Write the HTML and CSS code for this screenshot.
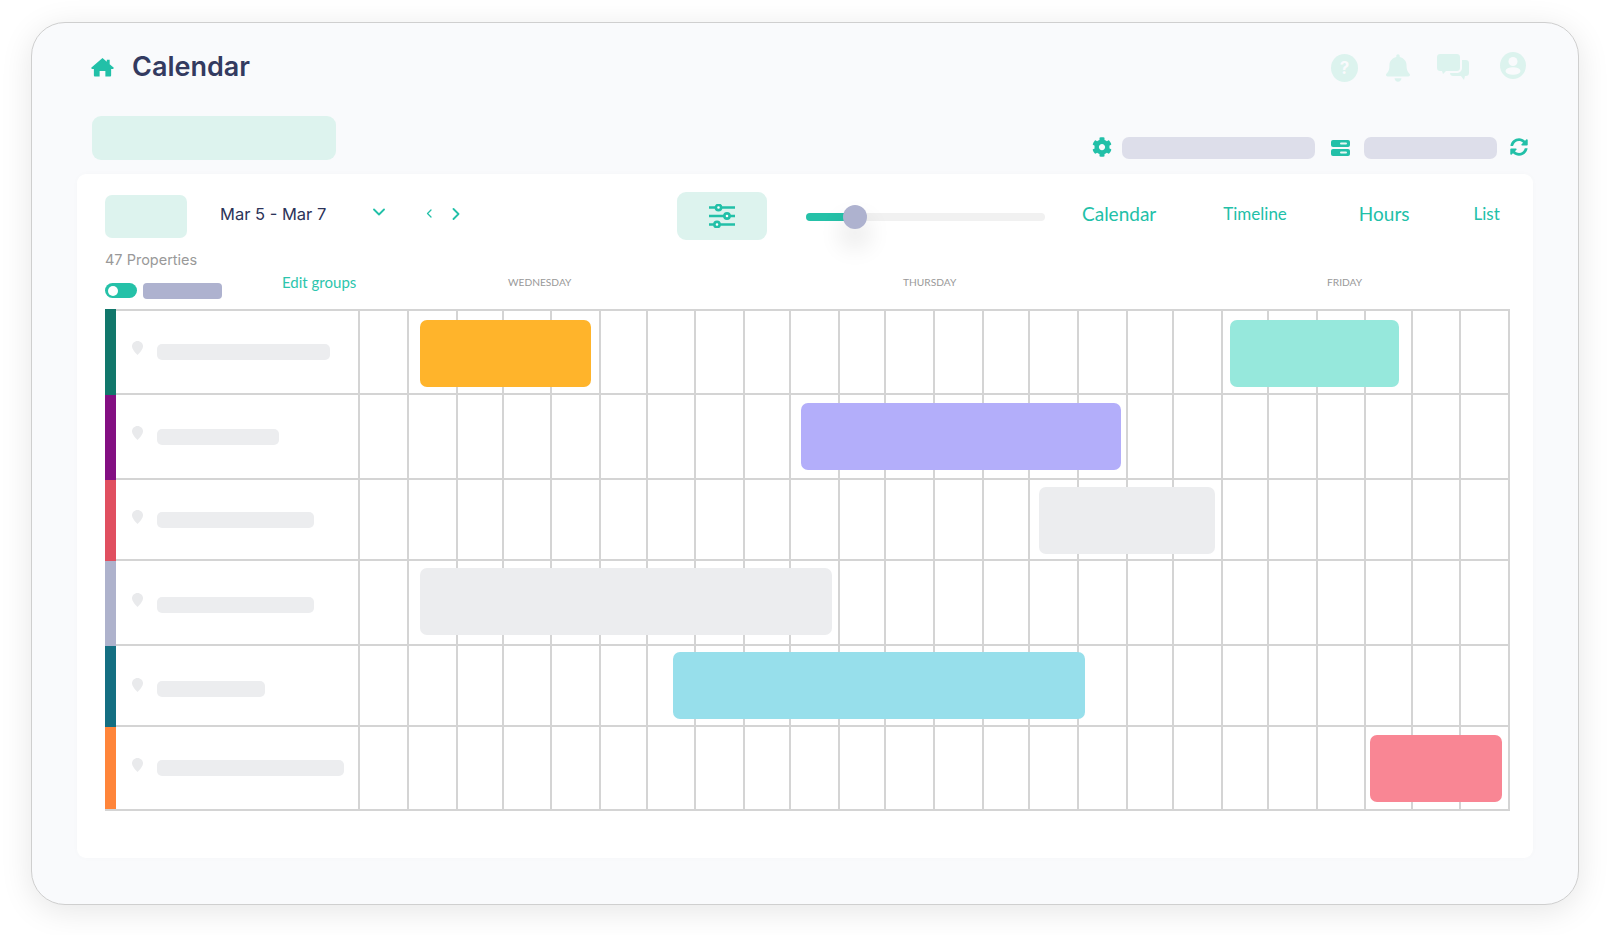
FILE: index.html
```html
<!DOCTYPE html>
<html lang="en">
<head>
<meta charset="utf-8">
<title>Calendar</title>
<link rel="stylesheet" href="styles.css">
</head>
<body>
<svg class="defs" width="0" height="0" aria-hidden="true">
  <symbol id="pin" viewBox="0 0 11 14"><path d="M5.5 0C8.5 0 11 2.300 11 5.200 11 8 8 11.500 5.500 14 3 11.500 0 8 0 5.200 0 2.300 2.500 0 5.500 0Z"/></symbol>
</svg>
<main class="frame">
  <header class="header">
    <svg class="home" viewBox="0 0 24 20"><path d="M12 .5 16.500 4.400V2.500h3V7l4 3.500c.6.600.2 1.500-.6 1.500H21v6.500c0 .8-.5 1.300-1.200 1.300H15v-5.500H9V20H4.200C3.500 20 3 19.300 3 18.500V12H1.100c-.8 0-1.200-.9-.6-1.500Z"/></svg>
    <h1 class="title">Calendar</h1>
    <div class="top-icons">
      <span class="help">?</span>
      <svg class="bell" viewBox="0 0 448 512"><path d="M224 512c35.320 0 63.970-28.650 63.970-64H160.030c0 35.350 28.650 64 63.970 64zm215.390-149.710c-19.320-20.760-55.470-51.990-55.470-154.290 0-77.700-54.480-139.900-127.940-155.160V32c0-17.670-14.320-32-31.980-32s-31.980 14.330-31.980 32v20.840C118.560 68.100 64.080 130.300 64.080 208c0 102.300-36.150 133.530-55.470 154.290-6 6.450-8.660 14.160-8.610 21.710.11 16.400 12.980 32 32.100 32h383.800c19.120 0 32-15.600 32.100-32 .05-7.550-2.610-15.270-8.610-21.710z"/></svg>
      <svg class="chat" viewBox="0 0 32 26"><path d="M3 0h17c1.700 0 3 1.300 3 3v11c0 1.700-1.300 3-3 3H9l-3 3-1-3H3c-1.700 0-3-1.300-3-3V3C0 1.300 1.300 0 3 0Z"/><path class="chat-back" d="M25 6h4c1.700 0 3 1.300 3 3v10c0 1.700-1.300 3-3 3h-1l-1 4-3-4h-8c-1.700 0-3-1.300-3-3h7c2.800 0 5-2.200 5-5Z"/></svg>
      <svg class="user" viewBox="0 0 26 27"><ellipse class="user-disc" cx="13" cy="13.500" rx="13" ry="13.500"/><circle class="user-cut" cx="13" cy="9.500" r="4.500"/><ellipse class="user-cut" cx="13" cy="19" rx="7.500" ry="3.800"/></svg>
    </div>
  </header>

  <div class="subbar">
    <div class="tenant"></div>
    <div class="tools">
      <svg class="gear" viewBox="0 0 512 512"><path d="M487.400 315.700l-42.600-24.600c4.300-23.200 4.300-47 0-70.200l42.600-24.600c4.900-2.800 7.100-8.600 5.500-14-11.100-35.600-30-67.800-54.700-94.600-3.800-4.100-10-5.100-14.800-2.300L380.800 110c-17.900-15.400-38.500-27.300-60.800-35.100V25.800c0-5.600-3.900-10.500-9.400-11.700-36.700-8.200-74.300-7.800-109.200 0-5.500 1.200-9.400 6.100-9.400 11.700V75c-22.200 7.900-42.800 19.800-60.800 35.100L88.700 85.500c-4.900-2.800-11-1.900-14.800 2.300-24.700 26.700-43.600 58.900-54.700 94.600-1.700 5.400.6 11.200 5.500 14L67.300 221c-4.300 23.200-4.300 47 0 70.200l-42.600 24.600c-4.900 2.800-7.100 8.600-5.500 14 11.100 35.600 30 67.800 54.700 94.600 3.800 4.100 10 5.100 14.800 2.300l42.600-24.600c17.900 15.400 38.500 27.300 60.800 35.100v49.200c0 5.600 3.900 10.500 9.400 11.700 36.700 8.200 74.300 7.800 109.200 0 5.500-1.200 9.400-6.100 9.400-11.700v-49.200c22.200-7.900 42.800-19.800 60.800-35.100l42.600 24.600c4.900 2.800 11 1.900 14.800-2.300 24.700-26.700 43.600-58.900 54.700-94.600 1.500-5.500-.7-11.300-5.600-14.100zM256 336c-44.100 0-80-35.900-80-80s35.900-80 80-80 80 35.900 80 80-35.900 80-80 80z"/></svg>
      <div class="pill pill-wide"></div>
      <svg class="server" viewBox="0 0 19 16"><rect width="19" height="7" rx="2"/><rect y="9" width="19" height="7" rx="2"/><rect class="server-slot" x="9" y="2.500" width="7" height="2" rx="1"/><rect class="server-slot" x="9" y="11.500" width="7" height="2" rx="1"/></svg>
      <div class="pill pill-narrow"></div>
      <svg class="sync" viewBox="0 0 512 512"><path d="M370.720 133.280C339.458 104.008 298.888 87.962 255.848 88c-77.458.068-144.328 53.178-162.791 126.850-1.344 5.363-6.122 9.150-11.651 9.150H24.103c-7.498 0-13.194-6.807-11.807-14.176C33.933 94.924 134.813 8 256 8c66.448 0 126.791 26.136 171.315 68.685L463.030 40.970C478.149 25.851 504 36.559 504 57.941V192c0 13.255-10.745 24-24 24H345.941c-21.382 0-32.090-25.851-16.971-40.971l41.750-41.749zM32 296h134.059c21.382 0 32.090 25.851 16.971 40.971l-41.750 41.750c31.262 29.273 71.835 45.319 114.876 45.280 77.418-.07 144.315-53.144 162.787-126.849 1.344-5.363 6.122-9.150 11.651-9.150h57.304c7.498 0 13.194 6.807 11.807 14.176C478.067 417.076 377.187 504 256 504c-66.448 0-126.791-26.136-171.315-68.685L48.970 471.030C33.851 486.149 8 475.441 8 454.059V320c0-13.255 10.745-24 24-24z"/></svg>
    </div>
  </div>

  <section class="card">
    <div class="controls">
      <div class="range-btn"></div>
      <span class="date">Mar 5 - Mar 7</span>
      <svg class="chev-down" viewBox="0 0 12 8"><path d="M1 1.500 6 6.500 11 1.500"/></svg>
      <svg class="chev-prev" viewBox="0 0 6 9"><path d="M5 1 1.500 4.500 5 8"/></svg>
      <svg class="chev-next" viewBox="0 0 8 12"><path d="M1.500 1 6.500 6 1.500 11"/></svg>
      <div class="filter-btn">
        <svg class="sliders" viewBox="0 0 26 24"><path d="M0 3.500H26M0 12H26M0 20.500H26"/><circle cx="9.500" cy="3.500" r="2.600"/><circle cx="18" cy="12" r="2.600"/><circle cx="8" cy="20.500" r="2.600"/></svg>
      </div>
      <div class="slider"><div class="slider-fill"></div><div class="slider-thumb"></div></div>
      <nav class="tabs">
        <span class="tab tab-calendar">Calendar</span>
        <span class="tab tab-timeline">Timeline</span>
        <span class="tab tab-hours">Hours</span>
        <span class="tab tab-list">List</span>
      </nav>
    </div>
    <div class="count">47 Properties</div>
    <div class="legend">
      <div class="legend-left">
        <div class="toggle"><span class="toggle-knob"></span></div>
        <div class="legend-pill"></div>
        <span class="edit">Edit groups</span>
      </div>
      <span class="day day-wed">WEDNESDAY</span>
      <span class="day day-thu">THURSDAY</span>
      <span class="day">FRIDAY</span>
    </div>

    <div class="grid">
      <div class="row r1"><div class="stripe s1"></div><div class="cell label"><svg class="pin"><use href="#pin"/></svg><div class="name n1"></div></div><div class="cell"></div><div class="cell"></div><div class="cell"></div><div class="cell"></div><div class="cell"></div><div class="cell"></div><div class="cell"></div><div class="cell"></div><div class="cell"></div><div class="cell"></div><div class="cell"></div><div class="cell"></div><div class="cell"></div><div class="cell"></div><div class="cell"></div><div class="cell"></div><div class="cell"></div><div class="cell"></div><div class="cell"></div><div class="cell"></div><div class="cell"></div><div class="cell"></div><div class="cell"></div><div class="cell"></div></div>
      <div class="row r2"><div class="stripe s2"></div><div class="cell label"><svg class="pin"><use href="#pin"/></svg><div class="name n2"></div></div><div class="cell"></div><div class="cell"></div><div class="cell"></div><div class="cell"></div><div class="cell"></div><div class="cell"></div><div class="cell"></div><div class="cell"></div><div class="cell"></div><div class="cell"></div><div class="cell"></div><div class="cell"></div><div class="cell"></div><div class="cell"></div><div class="cell"></div><div class="cell"></div><div class="cell"></div><div class="cell"></div><div class="cell"></div><div class="cell"></div><div class="cell"></div><div class="cell"></div><div class="cell"></div><div class="cell"></div></div>
      <div class="row r3"><div class="stripe s3"></div><div class="cell label"><svg class="pin"><use href="#pin"/></svg><div class="name n3"></div></div><div class="cell"></div><div class="cell"></div><div class="cell"></div><div class="cell"></div><div class="cell"></div><div class="cell"></div><div class="cell"></div><div class="cell"></div><div class="cell"></div><div class="cell"></div><div class="cell"></div><div class="cell"></div><div class="cell"></div><div class="cell"></div><div class="cell"></div><div class="cell"></div><div class="cell"></div><div class="cell"></div><div class="cell"></div><div class="cell"></div><div class="cell"></div><div class="cell"></div><div class="cell"></div><div class="cell"></div></div>
      <div class="row r4"><div class="stripe s4"></div><div class="cell label"><svg class="pin"><use href="#pin"/></svg><div class="name n3"></div></div><div class="cell"></div><div class="cell"></div><div class="cell"></div><div class="cell"></div><div class="cell"></div><div class="cell"></div><div class="cell"></div><div class="cell"></div><div class="cell"></div><div class="cell"></div><div class="cell"></div><div class="cell"></div><div class="cell"></div><div class="cell"></div><div class="cell"></div><div class="cell"></div><div class="cell"></div><div class="cell"></div><div class="cell"></div><div class="cell"></div><div class="cell"></div><div class="cell"></div><div class="cell"></div><div class="cell"></div></div>
      <div class="row r5"><div class="stripe s5"></div><div class="cell label"><svg class="pin"><use href="#pin"/></svg><div class="name n5"></div></div><div class="cell"></div><div class="cell"></div><div class="cell"></div><div class="cell"></div><div class="cell"></div><div class="cell"></div><div class="cell"></div><div class="cell"></div><div class="cell"></div><div class="cell"></div><div class="cell"></div><div class="cell"></div><div class="cell"></div><div class="cell"></div><div class="cell"></div><div class="cell"></div><div class="cell"></div><div class="cell"></div><div class="cell"></div><div class="cell"></div><div class="cell"></div><div class="cell"></div><div class="cell"></div><div class="cell"></div></div>
      <div class="row r6"><div class="stripe s6"></div><div class="cell label"><svg class="pin"><use href="#pin"/></svg><div class="name n6"></div></div><div class="cell"></div><div class="cell"></div><div class="cell"></div><div class="cell"></div><div class="cell"></div><div class="cell"></div><div class="cell"></div><div class="cell"></div><div class="cell"></div><div class="cell"></div><div class="cell"></div><div class="cell"></div><div class="cell"></div><div class="cell"></div><div class="cell"></div><div class="cell"></div><div class="cell"></div><div class="cell"></div><div class="cell"></div><div class="cell"></div><div class="cell"></div><div class="cell"></div><div class="cell"></div><div class="cell"></div></div>
      <div class="bar bar-orange"></div>
      <div class="bar bar-mint"></div>
      <div class="bar bar-violet"></div>
      <div class="bar bar-grey-a"></div>
      <div class="bar bar-grey-b"></div>
      <div class="bar bar-cyan"></div>
      <div class="bar bar-pink"></div>
    </div>
  </section>
</main>
</body>
</html>
```
FILE: styles.css
```css
* { box-sizing: border-box; }
html, body { margin: 0; padding: 0; }
body {
  width: 1618px;
  height: 935px;
  background: #fff;
  overflow: hidden;
  padding: 22px 0 0 31px;
  font-family: "Inter", "Liberation Sans", sans-serif;
}
.defs { position: absolute; }
.frame {
  width: 1548px;
  height: 883px;
  background: #f9fafc;
  border: 1px solid #cfcfcf;
  border-radius: 34px;
  box-shadow: 0 6px 32px rgba(0, 0, 0, .1);
}

/* Header */
.header {
  display: flex;
  align-items: center;
  height: 86px;
  padding: 0 52px 0 59px;
}
.home { width: 23px; height: 20px; fill: #22c0a8; margin-top: 2px; }
.title {
  margin: 0 0 0 18px;
  font-size: 27px;
  font-weight: 600;
  color: #333a60;
  letter-spacing: 0;
}
.top-icons {
  margin: 2px 0 0 auto;
  display: flex;
  align-items: flex-start;
}
.help {
  width: 27px;
  height: 28px;
  margin: 2px 0 0 0;
  border-radius: 50%;
  background: #dcf3ee;
  color: #f9fafc;
  font-size: 17px;
  font-weight: 700;
  line-height: 28px;
  text-align: center;
}
.bell { width: 24px; height: 28px; margin: 2px 0 0 28px; fill: #dcf3ee; }
.chat { width: 32px; height: 26px; margin: 2px 0 0 27px; fill: #dcf3ee; }
.chat-back { fill: #dcf3ee; }
.user { width: 26px; height: 27px; margin-left: 31px; }
.user-disc { fill: #dcf3ee; }
.user-cut { fill: #f9fafc; }

/* Sub bar */
.subbar {
  display: flex;
  justify-content: space-between;
  height: 65px;
  padding: 0 49px 0 59.500px;
}
.tenant {
  width: 244px;
  height: 44px;
  margin-top: 7px;
  border-radius: 9px;
  background: #ddf3ee;
}
.tools {
  display: flex;
  align-items: center;
  height: 22px;
  margin-top: 28px;
}
.gear { width: 20px; height: 20px; margin-top: -2px; fill: #22c0a8; }
.pill { height: 22px; border-radius: 7px; background: #dddeea; }
.pill-wide { width: 193px; margin: 0 16px 0 10px; }
.pill-narrow { width: 133px; margin: 0 13px 0 14px; }
.server { width: 19px; height: 16px; fill: #22c0a8; }
.server-slot { fill: #e7f7f4; }
.sync { width: 18px; height: 18px; margin: -3px 1px 0 0; fill: #22c0a8; }

/* Card */
.card {
  width: 1456px;
  height: 684px;
  margin-left: 45px;
  padding: 18px 0 0 28px;
  background: #fff;
  border-radius: 9px;
  box-shadow: 0 0 6px rgba(0, 0, 0, .02);
}
.controls { display: flex; align-items: flex-start; height: 48px; }
.range-btn {
  width: 82px;
  height: 43px;
  margin-top: 3px;
  border-radius: 7px;
  background: #ddf3ee;
}
.date {
  width: 150px;
  margin: 12px 0 0 33px;
  font-size: 16.500px;
  line-height: 20px;
  color: #2c3358;
  white-space: nowrap;
}
.chev-down, .chev-prev, .chev-next { fill: none; stroke: #22c0a8; stroke-linecap: round; stroke-linejoin: round; }
.chev-down { width: 12px; height: 8px; margin: 16px 0 0 3px; stroke-width: 1.800; }
.chev-prev { width: 6px; height: 9px; margin: 17px 0 0 41px; stroke-width: 1.300; }
.chev-next { width: 8px; height: 12px; margin: 16px 0 0 20px; stroke-width: 1.800; }
.filter-btn {
  display: flex;
  align-items: center;
  justify-content: center;
  width: 90px;
  height: 48px;
  margin-left: 217px;
  border-radius: 9px;
  background: #ddf3ee;
}
.sliders { width: 26px; height: 24px; fill: #ddf3ee; stroke: #22c0a8; stroke-width: 2.600; }
.sliders circle { fill: #fff; }
.slider {
  position: relative;
  width: 239px;
  height: 8px;
  margin: 21px 0 0 39px;
  border-radius: 4px;
  background: #f1f1f1;
}
.slider-fill { width: 50px; height: 8px; border-radius: 4px 0 0 4px; background: #25c1a8; }
.slider-thumb {
  position: absolute;
  top: -8px;
  left: 37px;
  width: 24px;
  height: 24px;
  border-radius: 50%;
  background: #aeb2cf;
  box-shadow: 0 16px 26px rgba(0, 0, 0, .14);
}
.tabs { display: flex; align-items: flex-start; font-family: "Lato", sans-serif; color: #22c0a8; }
.tab { line-height: 24px; white-space: nowrap; }
.tab-calendar { font-size: 19px; margin: 10px 0 0 37px; }
.tab-timeline { font-size: 17px; margin: 10px 0 0 67px; }
.tab-hours { font-size: 19px; margin: 10px 0 0 72px; }
.tab-list { font-size: 17px; margin: 10px 0 0 64px; }

.count {
  height: 20px;
  margin-top: 10px;
  font-size: 14.500px;
  line-height: 20px;
  color: #999;
}
.legend { display: flex; align-items: flex-start; height: 39px; }
.legend-left { display: flex; align-items: flex-start; width: 403px; }
.toggle {
  display: flex;
  align-items: center;
  width: 32px;
  height: 15px;
  margin-top: 13px;
  padding-left: 3px;
  border-radius: 8px;
  background: #25c1a8;
}
.toggle-knob { width: 10px; height: 10px; border-radius: 50%; background: #fff; }
.legend-pill {
  width: 79px;
  height: 16px;
  margin: 13px 0 0 6px;
  border-radius: 4px;
  background: #aeb2cf;
}
.edit {
  margin: 3px 0 0 60px;
  font-family: "Lato", sans-serif;
  font-size: 15px;
  line-height: 18px;
  color: #2cc5ad;
  white-space: nowrap;
}
.day {
  margin-top: 5px;
  font-family: "Lato", sans-serif;
  font-size: 10.200px;
  line-height: 14px;
  color: #999;
}
.day-wed { width: 395px; }
.day-thu { width: 424px; }

/* Grid */
.grid { position: relative; width: 1405px; }
.row {
  display: grid;
  grid-template-columns: 11px 244px 49px 49px 46px 48px 49px 47px 48px 49px 46px 49px 46px 49px 49px 46px 49px 49px 46px 49px 46px 49px 48px 47px 48px 49px;
}
.r1 { height: 86px; }
.r2 { height: 85px; }
.r3 { height: 81px; }
.r4 { height: 85px; }
.r5 { height: 81px; }
.r6 { height: 84px; }
.cell { border-right: 2px solid #d4d4d4; border-bottom: 2px solid #d4d4d4; }
.r1 .cell { border-top: 2px solid #d4d4d4; }
.r6 .stripe { border-bottom: 2px solid #d4d4d4; }
.s1 { background: #11776b; }
.s2 { background: #830f82; }
.s3 { background: #e04f60; }
.s4 { background: #aeb2cc; }
.s5 { background: #146f82; }
.s6 { background: #ff853a; }
.label { display: flex; align-items: center; padding: 0 0 0 16px; }
.pin { width: 11px; height: 14px; margin-right: 14px; fill: #e9eaec; }
.name { height: 16px; border-radius: 5px; background: #ecedef; }
.r1 .pin { margin-top: -8px; }
.r2 .pin { margin-top: -8px; }
.r3 .pin { margin-top: -6px; }
.r4 .pin { margin-top: -5px; }
.r5 .pin { margin-top: -1px; }
.r6 .pin { margin-top: -7px; }
.n1 { width: 173px; }
.n2 { width: 122px; }
.n3 { width: 157px; margin-top: 1px; }
.n5 { width: 108px; margin-top: 6px; }
.n6 { width: 187px; }
.r4 .name { margin-top: 4px; }

.bar { position: absolute; height: 67.500px; border-radius: 7px; }
.bar-orange { left: 315px; top: 10.500px; width: 171px; background: #ffb42b; }
.bar-mint { left: 1125px; top: 10.500px; width: 169px; background: #96e8dc; }
.bar-violet { left: 696px; top: 93.500px; width: 320px; background: #b3aefa; }
.bar-grey-a { left: 934px; top: 177.500px; width: 176px; background: #ecedef; }
.bar-grey-b { left: 315px; top: 258.500px; width: 412px; background: #ecedef; }
.bar-cyan { left: 567.500px; top: 342.500px; width: 412px; background: #97dfeb; }
.bar-pink { left: 1265px; top: 425.500px; width: 132px; background: #f98694; }
```
